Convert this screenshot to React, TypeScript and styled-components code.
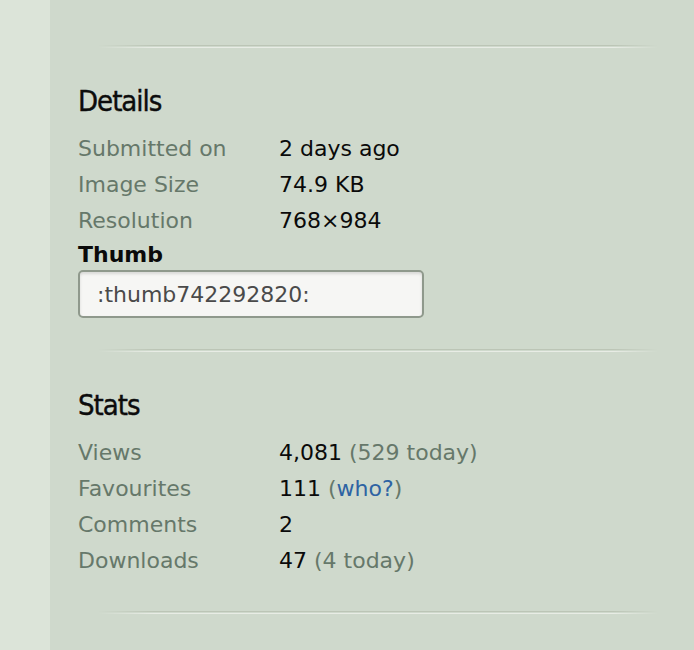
import styled, { createGlobalStyle } from "styled-components";

const GlobalStyle = createGlobalStyle`
  html, body {
    margin: 0;
    padding: 0;
    background: #cfd9cc;
  }
  body {
    font-family: "DejaVu Sans", Verdana, sans-serif;
  }
`;

type StatValue = {
  main: string;
  note?: string;
  link?: string;
};

const details: { label: string; value: string }[] = [
  { label: "Submitted on", value: "2 days ago" },
  { label: "Image Size", value: "74.9 KB" },
  { label: "Resolution", value: "768×984" },
];

const stats: { label: string; value: StatValue }[] = [
  { label: "Views", value: { main: "4,081", note: "529 today" } },
  { label: "Favourites", value: { main: "111", link: "who?" } },
  { label: "Comments", value: { main: "2" } },
  { label: "Downloads", value: { main: "47", note: "4 today" } },
];

const App = () => {
  return (
    <>
      <GlobalStyle />
      <Page>
        <Sidebar />
        <Main>
          <Divider />
          <Section $bottom={31}>
            <Heading>Details</Heading>
            <List>
              {details.map((d) => (
                <Row key={d.label}>
                  <Label>{d.label}</Label>
                  <Value>{d.value}</Value>
                </Row>
              ))}
            </List>
            <ThumbLabel>Thumb</ThumbLabel>
            <ThumbInput readOnly value=":thumb742292820:" />
          </Section>
          <Divider />
          <Section $bottom={33}>
            <Heading>Stats</Heading>
            <List>
              {stats.map((s) => (
                <Row key={s.label}>
                  <Label>{s.label}</Label>
                  <Value>
                    {s.value.main}
                    {s.value.note && <Note> ({s.value.note})</Note>}
                    {s.value.link && (
                      <Note>
                        {" "}
                        (<Link href="#">{s.value.link}</Link>)
                      </Note>
                    )}
                  </Value>
                </Row>
              ))}
            </List>
          </Section>
          <Divider />
        </Main>
      </Page>
    </>
  );
};

export default App;

const Page = styled.div`
  display: flex;
  min-height: 650px;
`;

const Sidebar = styled.div`
  width: 50px;
  flex-shrink: 0;
  background: #dce4d9;
`;

const Main = styled.div`
  flex: 1;
  padding: 45px 24px 40px 28px;
  background: #cfd9cc;
`;

const Divider = styled.div`
  height: 3px;
  margin: 0 12px 0 20px;
  background:
    linear-gradient(
      to right,
      rgba(207, 217, 204, 1) 0%,
      rgba(207, 217, 204, 0) 10%,
      rgba(207, 217, 204, 0) 92%,
      rgba(207, 217, 204, 1) 100%
    ),
    linear-gradient(
      to bottom,
      #bcc5b6 0px,
      #bcc5b6 1px,
      #cfd9cc 1px,
      #cfd9cc 2px,
      #e8ece5 2px,
      #e8ece5 3px
    );
`;

const Section = styled.section<{ $bottom: number }>`
  padding: 35px 0 ${(p) => p.$bottom}px;
`;

const Heading = styled.h2`
  margin: 0 0 11px;
  font-family: "DejaVu Sans Condensed", "DejaVu Sans", sans-serif;
  font-stretch: condensed;
  font-weight: normal;
  font-size: 29px;
  letter-spacing: -1px;
  line-height: 36px;
  color: #0c0c0c;
  -webkit-text-stroke: 0.4px #0c0c0c;
`;

const List = styled.div`
  display: flex;
  flex-direction: column;
`;

const Row = styled.div`
  display: grid;
  grid-template-columns: 201px 1fr;
  height: 36px;
  align-items: center;
  font-size: 22px;
`;

const Label = styled.span`
  color: #66786a;
`;

const Value = styled.span`
  color: #0a0a0a;
`;

const Note = styled.span`
  color: #66786a;
`;

const Link = styled.a`
  color: #2e63a3;
  text-decoration: none;
`;

const ThumbLabel = styled.div`
  margin-top: 1px;
  font-size: 22px;
  font-weight: bold;
  color: #0a0a0a;
  line-height: 32px;
`;

const ThumbInput = styled.input`
  box-sizing: border-box;
  width: 346px;
  height: 48px;
  margin-top: -1px;
  padding: 0 0 0 17px;
  border: 2px solid #8f998c;
  border-radius: 5px;
  background: #f6f6f4;
  box-shadow: inset 0 2px 3px rgba(0, 0, 0, 0.12);
  font-family: "DejaVu Sans", Verdana, sans-serif;
  font-size: 22px;
  color: #4a4a4a;
  outline: none;
`;
